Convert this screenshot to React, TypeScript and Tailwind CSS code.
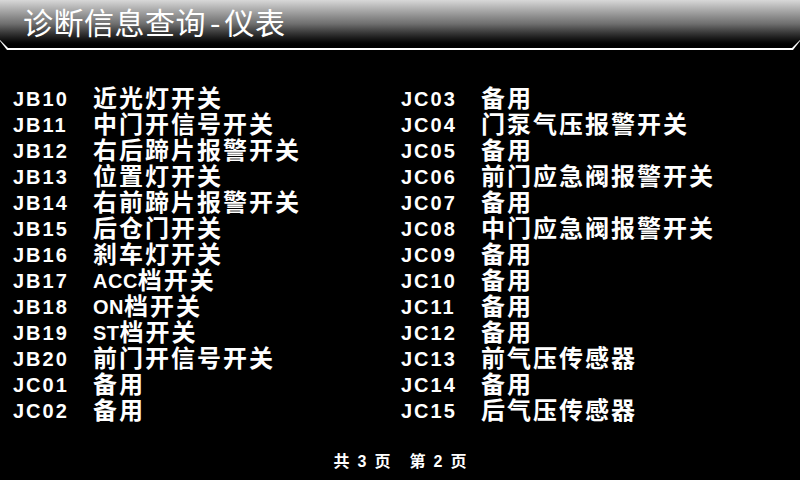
import React from "react";

const left: [string, string, string][] = [
  ["JB10", "", "近光灯开关"],
  ["JB11", "", "中门开信号开关"],
  ["JB12", "", "右后蹄片报警开关"],
  ["JB13", "", "位置灯开关"],
  ["JB14", "", "右前蹄片报警开关"],
  ["JB15", "", "后仓门开关"],
  ["JB16", "", "刹车灯开关"],
  ["JB17", "ACC", "档开关"],
  ["JB18", "ON", "档开关"],
  ["JB19", "ST", "档开关"],
  ["JB20", "", "前门开信号开关"],
  ["JC01", "", "备用"],
  ["JC02", "", "备用"],
];

const right: [string, string, string][] = [
  ["JC03", "", "备用"],
  ["JC04", "", "门泵气压报警开关"],
  ["JC05", "", "备用"],
  ["JC06", "", "前门应急阀报警开关"],
  ["JC07", "", "备用"],
  ["JC08", "", "中门应急阀报警开关"],
  ["JC09", "", "备用"],
  ["JC10", "", "备用"],
  ["JC11", "", "备用"],
  ["JC12", "", "备用"],
  ["JC13", "", "前气压传感器"],
  ["JC14", "", "备用"],
  ["JC15", "", "后气压传感器"],
];

function Row({ code, latin, label }: { code: string; latin: string; label: string }) {
  return (
    <div className="flex h-[26px] items-center">
      <span className="w-[80px] shrink-0 font-['Liberation_Sans',sans-serif] text-[20px] font-bold leading-[26px] tracking-[2px] text-white">
        {code}
      </span>
      {latin && (
        <span className="whitespace-nowrap font-['Liberation_Sans',sans-serif] text-[20px] font-bold leading-[26px] tracking-[0.5px] text-white">
          {latin}
        </span>
      )}
      <span className="whitespace-nowrap font-['Liberation_Sans','Noto_Sans_CJK_SC',sans-serif] text-[24px] font-bold leading-[26px] tracking-[2px] text-white">
        {label}
      </span>
    </div>
  );
}

export default function App() {
  return (
    <div className="relative h-[480px] w-[800px] overflow-hidden bg-black">
      {/* header */}
      <div className="relative h-[50px] w-full bg-white [clip-path:polygon(0_0,100%_0,100%_41px,calc(100%-7px)_50px,7px_50px,0_41px)]">
        <div className="h-[48px] w-full bg-gradient-to-b from-[#d8d8d8] via-[#6e6e6e] to-black pl-[23px] pt-[6px] [clip-path:polygon(0_0,100%_0,100%_40px,calc(100%-8px)_48px,8px_48px,0_40px)]">
          <div className="flex items-center font-['Noto_Sans_CJK_SC',sans-serif] text-[30px] font-normal leading-[30px] text-white">
            <span className="tracking-[0.5px]">诊断信息查询</span>
            <span className="px-[4px]">-</span>
            <span className="tracking-[0.5px]">仪表</span>
          </div>
        </div>
      </div>

      {/* list */}
      <div className="mt-[36px] grid grid-cols-[388px_388px] pl-[13px]">
        <div className="flex flex-col">
          {left.map(([c, la, l]) => (
            <Row key={c} code={c} latin={la} label={l} />
          ))}
        </div>
        <div className="flex flex-col">
          {right.map(([c, la, l]) => (
            <Row key={c} code={c} latin={la} label={l} />
          ))}
        </div>
      </div>

      {/* footer */}
      <div className="mt-[28px] flex h-[20px] items-center justify-center gap-[19px] font-['Liberation_Sans','Noto_Sans_CJK_SC',sans-serif] text-[16px] font-bold leading-[20px] text-white">
        <div className="flex items-center gap-[8px]">
          <span>共</span>
          <span>3</span>
          <span>页</span>
        </div>
        <div className="flex items-center gap-[8px]">
          <span>第</span>
          <span>2</span>
          <span>页</span>
        </div>
      </div>
    </div>
  );
}
